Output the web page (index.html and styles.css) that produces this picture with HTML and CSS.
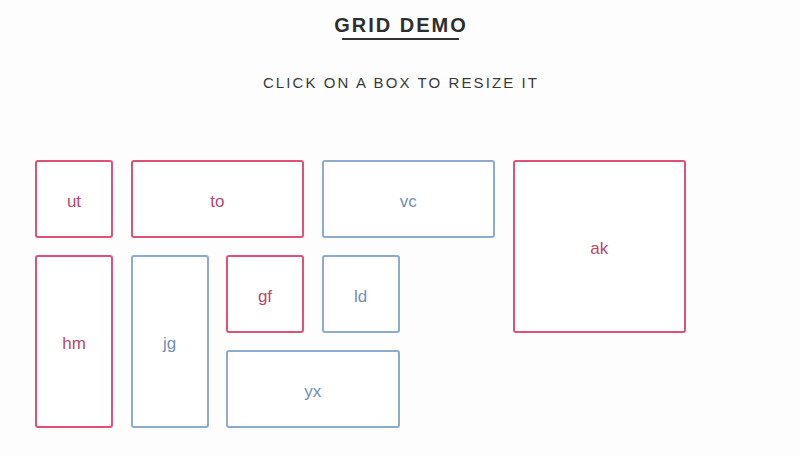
FILE: index.html
```html
<!DOCTYPE html>
<html>
<head>
<meta charset="utf-8">
<link rel="stylesheet" href="styles.css">
</head>
<body>
<header class="head">
  <h1 class="title">GRID DEMO</h1>
  <div class="rule"></div>
  <p class="sub">CLICK ON A BOX TO RESIZE IT</p>
</header>
<main class="grid">
  <div class="box pink ut">ut</div>
  <div class="box pink to">to</div>
  <div class="box blue vc">vc</div>
  <div class="box pink ak">ak</div>
  <div class="box pink hm">hm</div>
  <div class="box blue jg">jg</div>
  <div class="box pink gf">gf</div>
  <div class="box blue ld">ld</div>
  <div class="box blue yx">yx</div>
</main>
</body>
</html>
```
FILE: styles.css
```css
html, body {
  margin: 0;
  background: #fdfdfe;
  font-family: "Liberation Sans", Arial, sans-serif;
}
.head {
  display: flex;
  flex-direction: column;
  align-items: center;
  padding-top: 14px;
}
.title {
  margin: 0;
  font-size: 20px;
  font-weight: bold;
  letter-spacing: 2px;
  color: #2e2e2e;
  line-height: 22px;
  padding-left: 2px;
}
.rule {
  width: 117px;
  height: 2px;
  background: #333;
  margin-top: 2px;
}
.sub {
  margin: 34px 0 0;
  font-size: 15px;
  letter-spacing: 2.1px;
  color: #3a3a3a;
  line-height: 18px;
  padding-left: 2px;
}
.grid {
  display: grid;
  grid-template-columns: repeat(7, 78px);
  grid-auto-rows: 78px;
  column-gap: 17.5px;
  row-gap: 17px;
  margin: 68px 0 0 35px;
}
.box {
  box-sizing: border-box;
  border: 2px solid;
  border-radius: 3px;
  display: flex;
  align-items: center;
  justify-content: center;
  font-size: 17px;
  padding-top: 5px;
  background: #fff;
}
.pink { border-color: #e0517a; color: #b8476c; }
.blue { border-color: #8caccd; color: #6f8fb8; }
.ut { grid-column: 1; grid-row: 1; }
.to { grid-column: 2 / span 2; grid-row: 1; }
.vc { grid-column: 4 / span 2; grid-row: 1; }
.ak { grid-column: 6 / span 2; grid-row: 1 / span 2; }
.hm { grid-column: 1; grid-row: 2 / span 2; }
.jg { grid-column: 2; grid-row: 2 / span 2; }
.gf { grid-column: 3; grid-row: 2; }
.ld { grid-column: 4; grid-row: 2; }
.yx { grid-column: 3 / span 2; grid-row: 3; }
```
